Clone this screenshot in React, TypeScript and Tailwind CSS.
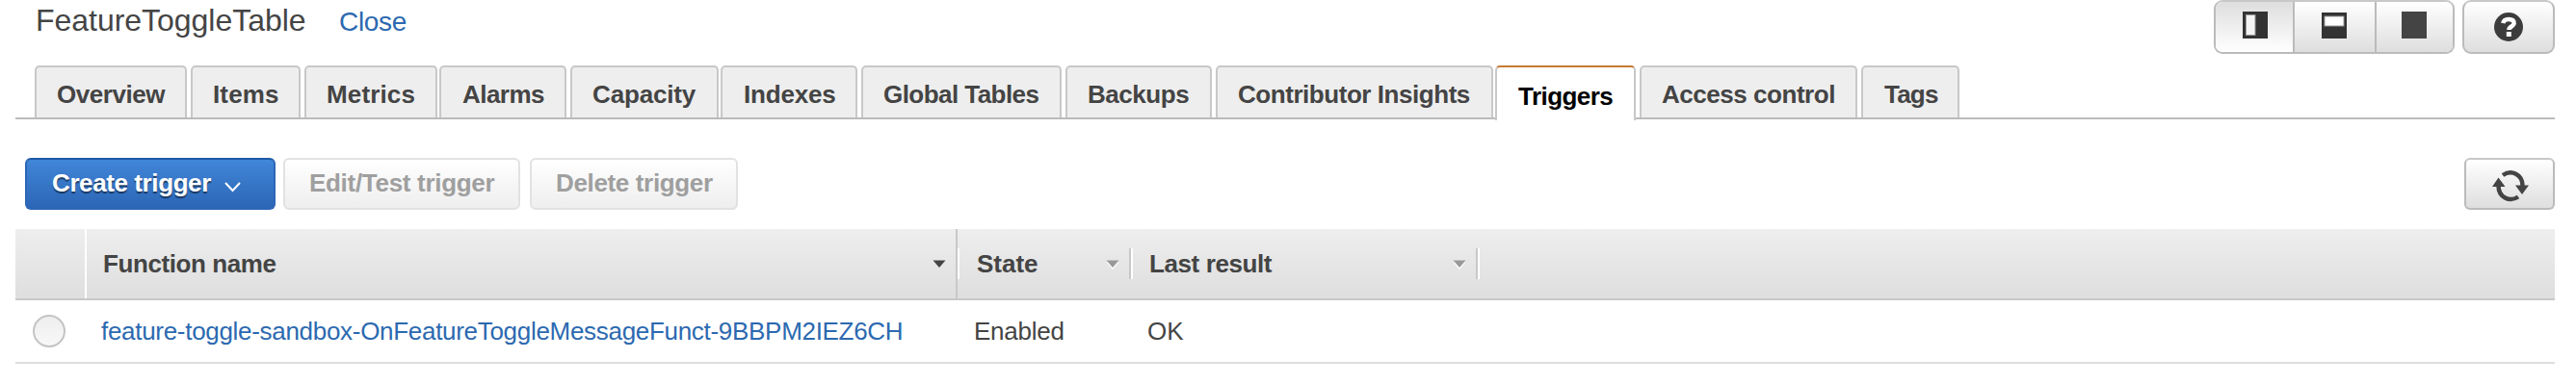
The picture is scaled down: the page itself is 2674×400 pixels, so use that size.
import type { ReactNode } from "react";

const tabs = [
  { label: "Overview", box: "w-[158px] mr-1", text: "tracking-[-0.45px]" },
  { label: "Items", box: "w-[114px] mr-1", text: "tracking-[0.15px]" },
  { label: "Metrics", box: "w-[138px] mr-0.5", text: "tracking-[0.15px]" },
  { label: "Alarms", box: "w-[132px] mr-1", text: "tracking-[-0.55px] ml-px" },
  { label: "Capacity", box: "w-[154px] mr-0.5", text: "tracking-[-0.15px]" },
  { label: "Indexes", box: "w-[142px] mr-1", text: "tracking-[-0.2px] ml-px" },
  { label: "Global Tables", box: "w-[208px] mr-1", text: "tracking-[-0.55px]" },
  { label: "Backups", box: "w-[152px] mr-1", text: "tracking-[-0.45px]" },
  { label: "Contributor Insights", box: "w-[288px] mr-0.5", text: "tracking-[-0.45px]" },
  { label: "Triggers", box: "w-[146px] mr-1", text: "tracking-[-0.55px] ml-px", active: true },
  { label: "Access control", box: "w-[226px] mr-1", text: "tracking-[-0.46px]" },
  { label: "Tags", box: "w-[102px]", text: "tracking-[-0.8px] ml-px" },
];

function Tab({ label, box, text, active }: { label: string; box: string; text: string; active?: boolean }) {
  const look = active
    ? "h-[57px] bg-white border-t-[#c87a35] text-black pt-[15px]"
    : "h-[54px] bg-[#eee] border-t-[#c8c8c8] text-[#444] pt-[13px]";
  return (
    <div className={`${box} ${look} shrink-0 rounded-t-[5px] border-2 border-b-0 border-x-[#c8c8c8] pl-[21px] text-[26px] leading-[30px] font-bold whitespace-nowrap`}>
      <span className={text}>{label}</span>
    </div>
  );
}

function Sorter({ dark }: { dark?: boolean }) {
  return (
    <svg width="14" height="10" viewBox="0 0 14 10" className="mt-0.5 shrink-0">
      {!dark && <path d="M0.5 2h13L7 10z" fill="#fff" />}
      <path d="M0.5 0.5h13L7 8z" fill={dark ? "#444" : "#999"} />
    </svg>
  );
}

function Divider() {
  return <div className="h-8 w-1 shrink-0 border-l-2 border-[#c8c8c8] bg-white" />;
}

function DisabledButton({ className, children }: { className: string; children: ReactNode }) {
  return (
    <button className={`${className} h-[54px] rounded-[6px] border-2 border-[#e2e2e2] bg-linear-to-b from-white to-[#eee] pb-0.5 text-left text-[26px] leading-[30px] font-bold whitespace-nowrap text-[#9f9f9f]`}>
      {children}
    </button>
  );
}

export default function App() {
  return (
    <div className="h-[400px] w-[2674px] overflow-hidden bg-white pr-[22px] pl-4 font-['Liberation_Sans',Arial,sans-serif] text-[#444]">
      <header className="flex h-[68px] items-start">
        <h1 className="w-[315px] pt-[3px] pl-[21px] text-[32px] leading-[37px] tracking-[-0.03px]">FeatureToggleTable</h1>
        <a className="pt-[7px] pl-[21px] text-[28px] leading-[31px] tracking-[-0.3px] text-[#2c69b0]">Close</a>
        <div className="ml-auto flex h-14 w-[250px] overflow-hidden rounded-[9px] border-2 border-[#bbb] border-t-[#c8c8c8]">
          <div className="flex w-20 justify-center bg-linear-to-b from-[#dedede] to-white pt-2.5">
            <svg width="26" height="28" viewBox="0 0 26 28" className="ml-0.5">
              <path d="M0 0h26v28H0z" fill="#333" />
              <path d="M3 3h10.500v22H3z" fill="#999" />
              <path d="M4 4h8.500v20H4z" fill="#f4f4f4" />
            </svg>
          </div>
          <div className="flex w-[85px] justify-center border-l-2 border-[#bbb] bg-linear-to-b from-white to-[#dedede] pt-[11px]">
            <svg width="26" height="27" viewBox="0 0 26 27" className="ml-[-1px]">
              <path d="M0 0h26v27H0z" fill="#333" />
              <path d="M2.500 3.500h21v11h-21z" fill="#999" />
              <path d="M3.500 4.500h19v9h-19z" fill="#fff" />
            </svg>
          </div>
          <div className="flex flex-1 justify-center border-l-2 border-[#bbb] bg-linear-to-b from-white to-[#dedede] pt-2.5">
            <svg width="26" height="28" viewBox="0 0 26 28" className="ml-[-1px]">
              <path d="M0 0h26v28H0z" fill="#444" />
            </svg>
          </div>
        </div>
        <div className="ml-2 flex h-14 w-24 items-center justify-center rounded-[9px] border-2 border-[#bbb] border-t-[#c8c8c8] bg-linear-to-b from-white to-[#dedede]">
          <svg width="30" height="30" viewBox="0 0 30 30">
            <circle cx="15" cy="15" r="15" fill="#3c3c3c" />
            <path d="M9.300 11.200C9.800 8.300 11.800 7 15 7c3.400 0 5.600 1.500 5.600 4.100 0 3.600-5.200 3.200-5.200 6.900" fill="none" stroke="#fff" strokeWidth="4.500" />
            <path d="M12.800 20h5v5h-5z" fill="#fff" />
          </svg>
        </div>
      </header>

      <nav className="flex h-14 items-start border-b-2 border-[#bbb] pl-5">
        {tabs.map((t) => (
          <Tab key={t.label} {...t} />
        ))}
      </nav>

      <div className="flex items-center pt-10 pl-2.5">
        <button className="flex h-[54px] w-[260px] items-center rounded-[6px] border-2 border-[#2c66b6] border-t-[#1f5aa5] bg-linear-to-b from-[#4186d8] to-[#2c66b6] pb-0.5 pl-[26px] text-[26px] leading-[30px] font-bold whitespace-nowrap text-white [text-shadow:0_2px_1px_rgba(0,0,0,0.5)]">
          <span className="tracking-[-0.4px]">Create trigger</span>
          <svg width="17" height="11" viewBox="0 0 17 11" className="mt-2 ml-[14px]">
            <path d="M1 1l7.500 8L16 1" fill="none" stroke="#fff" strokeWidth="2" />
          </svg>
        </button>
        <DisabledButton className="ml-2 w-[246px] pl-[25px] tracking-[-0.3px]">Edit/Test trigger</DisabledButton>
        <DisabledButton className="ml-2.5 w-[216px] pl-[25px] tracking-[-0.35px]">Delete trigger</DisabledButton>
        <button className="ml-auto flex h-[54px] w-[94px] items-center justify-center rounded-[6px] border-2 border-[#bbb] border-t-[#c8c8c8] bg-linear-to-b from-white to-[#dedede]">
          <svg width="38" height="34" viewBox="0 0 38 34" className="mt-1 ml-0.5">
            <path d="M11 6C20 0 31.500 5 31.500 17M27 28.500C18 34.500 6.500 29 6.500 17" fill="none" stroke="#444" strokeWidth="4.500" />
            <path d="M24 16.500h14l-7 9.500zM0 18h13.500L6.500 8.500z" fill="#444" />
          </svg>
        </button>
      </div>

      <section className="pt-5 text-[26px] leading-[30px] whitespace-nowrap">
        <div className="flex h-[74px] items-center border-b-2 border-[#c8c8c8] bg-linear-to-b from-[#eee] to-[#dedede] font-bold">
          <div className="h-full w-[74px] border-r-2 border-white" />
          <div className="flex h-full w-[904px] items-center justify-between border-r-2 border-[#c8c8c8] pr-2.5 pl-[17px]">
            <span className="tracking-[-0.42px]">Function name</span>
            <Sorter dark />
          </div>
          <div className="h-8 w-0.5 bg-white" />
          <div className="flex w-[176px] items-center justify-between pr-2.5 pl-[18px]">
            <span>State</span>
            <Sorter />
          </div>
          <Divider />
          <div className="flex w-[356px] items-center justify-between pr-2.5 pl-[17px]">
            <span className="tracking-[-0.4px]">Last result</span>
            <Sorter />
          </div>
          <Divider />
        </div>
        <div className="flex h-[66px] items-center border-b-2 border-[#ddd]">
          <div className="w-[89px] pl-[18px]">
            <div className="size-[34px] rounded-full border-2 border-[#c4c4c4] bg-linear-to-b from-[#eee] to-[#f8f8f8]" />
          </div>
          <a className="w-[906px] tracking-[-0.3px] text-[#2c69b0]">feature-toggle-sandbox-OnFeatureToggleMessageFunct-9BBPM2IEZ6CH</a>
          <span className="w-[180px] tracking-[-0.25px]">Enabled</span>
          <span>OK</span>
        </div>
      </section>
    </div>
  );
}
